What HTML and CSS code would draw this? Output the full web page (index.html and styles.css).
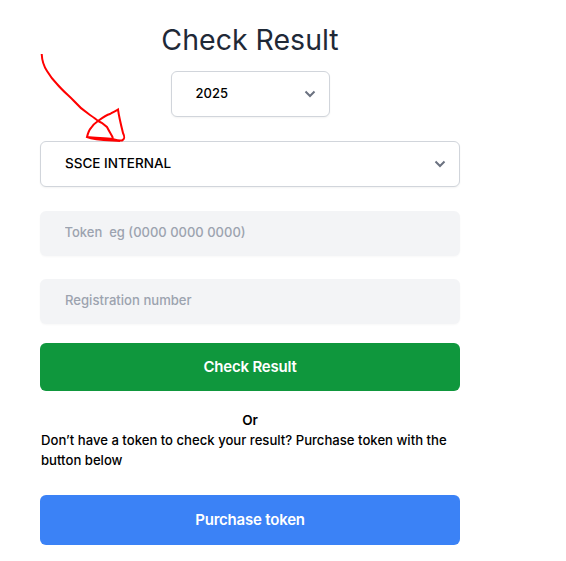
FILE: index.html
```html
<!DOCTYPE html>
<html lang="en">
<head>
    <meta charset="UTF-8" />
    <meta name="viewport" content="width=device-width, initial-scale=1.0"/>
    <title>Check Result</title>
    <link rel="stylesheet" href="styles.css">
</head>
<body>
    <div class="container">
        <h1 class="title">Check Result</h1>

        <div class="select select-year">
            <span>2025</span>
            <svg class="chevron" width="12" height="8" viewBox="0 0 12 8"><path d="M1.500 1.500l4.500 4.500 4.500-4.500" /></svg>
        </div>

        <div class="select select-course">
            <span class="course-name">SSCE INTERNAL</span>
            <svg class="chevron" width="12" height="8" viewBox="0 0 12 8"><path d="M1.500 1.500l4.500 4.500 4.500-4.500" /></svg>
        </div>

        <input class="field field-token" type="text" placeholder="Token  eg (0000 0000 0000)">
        <input class="field field-reg" type="text" placeholder="Registration number">

        <button class="btn btn-check">Check Result</button>

        <p class="or">Or</p>
        <p class="note">Don’t have a token to check your result? Purchase token with the button below</p>

        <button class="btn btn-purchase">Purchase token</button>
    </div>

    <!-- red pen mark drawn over the screenshot -->
    <svg class="pen-mark" width="566" height="561" viewBox="0 0 566 561">
        <path d="M41.700 54C42 60 43 65 47 71C50 76 54 81 57 84C62 90 68 95 73 100C79 107 84 111 90 115C93 117 96 119 98 121C102 118 106 115 110 114C113 112 116 111 118 109.500C119 117 121 125 123 133C125 137 125 139 122 140.500C118 141 116 140 113 139C105 138 96 138 87 137C88 133 89 130 91 128C93 125 95 123 98 121C101 122 104 124 107 127C109 131 111 134 113 138M87 137C95 140 105 140 120 141" />
    </svg>
</body>
</html>
```

FILE: styles.css
```css
body {
    font-family: Inter, "Noto Sans", sans-serif;
    margin: 0;
    padding: 0;
    background-color: #fff;
    color: #000;
}

.container {
    width: 420px;
    margin-left: 40px;
    display: flex;
    flex-direction: column;
    padding-top: 20px;
}

.title {
    margin: 0 0 12px;
    height: 39px;
    line-height: 39px;
    font-size: 28.500px;
    font-weight: 400;
    text-align: center;
    color: #1f2937;
}

.select {
    box-sizing: border-box;
    display: flex;
    align-items: center;
    justify-content: space-between;
    background-color: #fff;
    border: 1px solid #d1d5db;
    border-radius: 6px;
    box-shadow: 0 1px 2px rgba(0, 0, 0, 0.05);
    font-size: 13px;
    font-weight: 500;
}

.select span {
    margin-bottom: 2px;
}

.course-name {
    font-size: 13.500px;
}

.select-year {
    width: 159px;
    height: 46px;
    align-self: center;
    padding: 0 13px 0 24px;
    margin-bottom: 24px;
}

.select-course {
    height: 46px;
    padding: 0 13px 0 24px;
    margin-bottom: 24px;
}

.chevron {
    fill: none;
    stroke: #6b7280;
    stroke-width: 2;
}

.field {
    box-sizing: border-box;
    width: 100%;
    border: none;
    outline: none;
    background-color: #f3f4f6;
    border-radius: 6px;
    padding: 0 25px 3px;
    font-family: inherit;
    font-size: 13.100px;
    font-weight: 500;
    box-shadow: 0 1px 2px rgba(0, 0, 0, 0.03);
}

.field::placeholder {
    color: #9ca3af;
    opacity: 1;
}

.field-token {
    height: 45px;
    margin-bottom: 23px;
    padding-left: 24.500px;
    font-size: 13px;
}

.field-reg {
    height: 45px;
    margin-bottom: 19px;
}

.btn {
    display: block;
    width: 100%;
    border: none;
    border-radius: 6px;
    color: #fff;
    font-family: inherit;
    font-size: 15px;
    font-weight: 600;
    letter-spacing: -0.2px;
    padding: 0 0 2px;
    cursor: pointer;
}

.btn-check {
    height: 48px;
    background-color: #0f973d;
}

.btn-purchase {
    height: 50px;
    background-color: #3b82f6;
}

.or {
    margin: 19px 0 0;
    font-size: 13.500px;
    line-height: 20px;
    font-weight: 600;
    text-align: center;
}

.note {
    margin: 0 0 25px;
    padding-left: 1px;
    font-size: 13.130px;
    line-height: 20px;
    font-weight: 500;
}

.pen-mark {
    position: absolute;
    left: 0;
    top: 0;
    fill: none;
    stroke: #ff0000;
    stroke-width: 2;
    pointer-events: none;
}
```
